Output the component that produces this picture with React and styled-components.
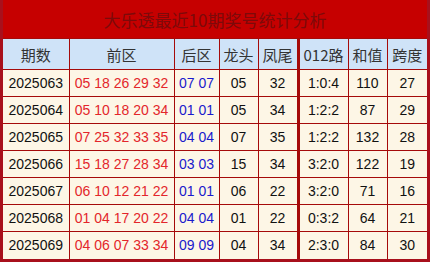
import React from 'react';
import styled, { createGlobalStyle } from 'styled-components';

const rows = [
	['2025063', '05 18 26 29 32', '07 07', '05', '32', '1:0:4', '110', '27'],
	['2025064', '05 10 18 20 34', '01 01', '05', '34', '1:2:2', '87', '29'],
	['2025065', '07 25 32 33 35', '04 04', '07', '35', '1:2:2', '132', '28'],
	['2025066', '15 18 27 28 34', '03 03', '15', '34', '3:2:0', '122', '19'],
	['2025067', '06 10 12 21 22', '01 01', '06', '22', '3:2:0', '71', '16'],
	['2025068', '01 04 17 20 22', '04 04', '01', '22', '0:3:2', '64', '21'],
	['2025069', '04 06 07 33 34', '09 09', '04', '34', '2:3:0', '84', '30'],
];

const heads = ['期数', '前区', '后区', '龙头', '凤尾', '012路', '和值', '跨度'];
const widths = [66, 105, 45, 39, 40, 50, 39, 40];

export default function App() {
	return (
		<>
			<GlobalStyle />
			<Frame>
				<Title>大乐透最近10期奖号统计分析</Title>
				<Table>
					<colgroup>
						{widths.map((w, i) => (
							<col key={i} style={{ width: w }} />
						))}
					</colgroup>
					<thead>
						<tr>
							{heads.map((h, i) => (
								<Head key={h} $split={i === 5}>
									{h}
								</Head>
							))}
						</tr>
					</thead>
					<tbody>
						{rows.map(r => (
							<Row key={r[0]}>
								{r.map((v, i) => (
									<Cell
										key={i}
										$split={i === 5}
										$tone={i === 1 ? 'red' : i === 2 ? 'blue' : null}
									>
										{v}
									</Cell>
								))}
							</Row>
						))}
					</tbody>
				</Table>
			</Frame>
		</>
	);
}

const GlobalStyle = createGlobalStyle`
	body {
		margin: 0;
		background: #fff;
		font-family: "Liberation Sans", "Noto Sans CJK SC", sans-serif;
	}
`;

const Frame = styled.div`
	width: 430px;
	height: 262px;
	box-sizing: border-box;
	background: #c60000;
	border: 3px solid #a8101c;
	border-top: 0;
	border-bottom-width: 4px;
	display: flex;
	flex-direction: column;
`;

const Title = styled.div`
	height: 38px;
	flex: none;
	display: flex;
	align-items: center;
	justify-content: center;
	font-size: 17px;
	color: #7c0a0a;
	font-family: "Noto Sans CJK SC", sans-serif;
`;

const Table = styled.table`
	width: 424px;
	table-layout: fixed;
	border-collapse: collapse;
	font-size: 14px;
	color: #111;
`;

const Head = styled.th`
	height: 30px;
	padding: 0;
	background: #cfe3f8;
	font-weight: normal;
	font-size: 15px;
	color: #333;
	font-family: "Noto Sans CJK SC", sans-serif;
	border: 1px solid #a50a0a;
	border-left-width: ${p => (p.$split ? '3px' : '1px')};
	&:first-child { border-left: 0; }
	&:last-child { border-right: 0; }
`;

const Row = styled.tr`
	height: 27px;
`;

const Cell = styled.td`
	padding: 0;
	text-align: center;
	background: #fdf6e6;
	border: 1px solid #a50a0a;
	border-left-width: ${p => (p.$split ? '3px' : '1px')};
	color: ${p => (p.$tone === 'red' ? '#e3262b' : p.$tone === 'blue' ? '#1a1acc' : '#111')};
	&:first-child { border-left: 0; }
	&:last-child { border-right: 0; }
	tr:last-child > & { border-bottom: 0; }
`;
